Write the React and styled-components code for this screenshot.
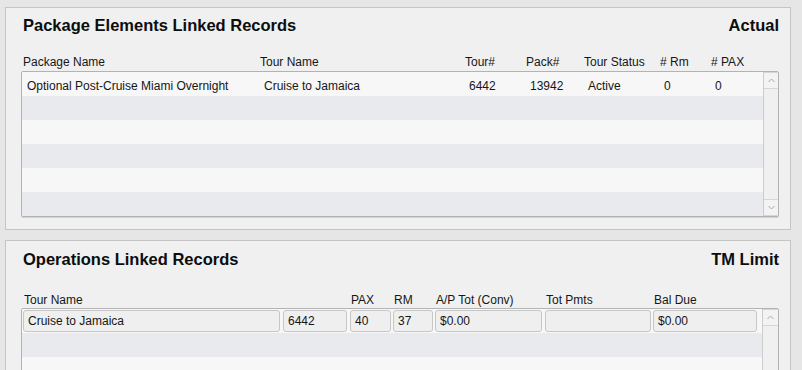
import React from "react";
import styled, { createGlobalStyle } from "styled-components";

const Global = createGlobalStyle`
  html, body { margin: 0; padding: 0; background: #e6e6e6; overflow: hidden; }
  body { font-family: "Liberation Sans", Arial, sans-serif; color: #161616; }
`;

const Page = styled.div`
  display: flex;
  flex-direction: column;
  gap: 10px;
  padding: 7px 0 0 5px;
  width: 786px;
`;

const Panel = styled.section`
  background: #f0f0f0;
  border: 1px solid #c4c4c4;
  padding: ${(p) => p.$pad};
  display: flex;
  flex-direction: column;
`;

const TitleRow = styled.div`
  display: flex;
  justify-content: space-between;
  padding: 0 0 0 2px;
  font-size: 16.5px;
  line-height: 20px;
  font-weight: bold;
  color: #0d0d0d;
`;

const Labels = styled.div`
  display: grid;
  grid-template-columns: ${(p) => p.$cols};
  margin: ${(p) => p.$margin};
  padding-left: ${(p) => p.$indent};
  font-size: 12px;
  line-height: 16px;
  color: #161616;
  white-space: nowrap;
`;

const Grid = styled.div`
  display: flex;
  border: 1px solid #b3b3b3;
  border-radius: 2px;
  box-shadow: 0 1px 0 #d4d4d4;
  background: #f7f7f7;
  overflow: hidden;
`;

const Rows = styled.div`
  flex: 1;
  display: flex;
  flex-direction: column;
`;

const Row = styled.div`
  display: grid;
  grid-template-columns: ${(p) => p.$cols};
  align-items: center;
  height: 24px;
  flex: none;
  box-sizing: border-box;
  padding-left: ${(p) => p.$indent || 0}px;
  background: ${(p) => (p.$alt ? "#e8eaed" : "#f7f7f7")};
  font-size: 12px;
  color: #161616;
  white-space: nowrap;
`;

const Cell = styled.span`
  padding: 3px 0 0 5px;
  overflow: hidden;
`;

const BoxCell = styled.span`
  height: 22px;
  margin-right: ${(p) => p.$gap}px;
  box-sizing: border-box;
  border: 1px solid #c6c6c6;
  border-radius: 3px;
  background: #efefef;
  padding: 1px 0 0 4px;
  line-height: 19px;
  overflow: hidden;
`;

const Scroll = styled.div`
  width: 15px;
  flex: none;
  display: flex;
  flex-direction: column;
  justify-content: space-between;
  border-left: 1px solid #cdcdcd;
  background: #f0f0f0;
`;

const ScrollBtn = styled.div`
  height: 15px;
  display: flex;
  align-items: center;
  justify-content: center;
  border: 1px solid #d6d6d6;
  border-left: none;
  border-right: none;
  background: #f3f3f3;
`;

const Chevron = ({ up }) => (
  <svg width="7" height="5" viewBox="0 0 7 5">
    <path
      d={up ? "M0.5 4 L3.5 1 L6.5 4" : "M0.5 1 L3.5 4 L6.5 1"}
      fill="none"
      stroke="#a8a8a8"
      strokeWidth="1"
    />
  </svg>
);

const cols1 = "237px 205px 61px 58px 76px 51px 53px";
const cols2 = "260px 67px 43px 42px 110px 108px 108px";

const pkgRows = [
  ["Optional Post-Cruise Miami Overnight", "Cruise to Jamaica", "6442", "13942", "Active", "0", "0"],
];

export default function App() {
  return (
    <>
      <Global />
      <Page>
        <Panel $pad="7px 11px 12px 15px">
          <TitleRow>
            <span>Package Elements Linked Records</span>
            <span>Actual</span>
          </TitleRow>
          <Labels $cols={cols1} $margin="19px 0 1px 0" $indent="2px">
            <span>Package Name</span>
            <span>Tour Name</span>
            <span>Tour#</span>
            <span>Pack#</span>
            <span>Tour Status</span>
            <span># Rm</span>
            <span># PAX</span>
          </Labels>
          <Grid>
            <Rows>
              {[0, 1, 2, 3, 4, 5].map((i) => (
                <Row key={i} $cols={cols1} $alt={i % 2 === 1}>
                  {(pkgRows[i] || ["", "", "", "", "", "", ""]).map((v, j) => (
                    <Cell key={j}>{v}</Cell>
                  ))}
                </Row>
              ))}
            </Rows>
            <Scroll>
              <ScrollBtn><Chevron up /></ScrollBtn>
              <ScrollBtn><Chevron /></ScrollBtn>
            </Scroll>
          </Grid>
        </Panel>
        <Panel $pad="8px 11px 12px 15px">
          <TitleRow>
            <span>Operations Linked Records</span>
            <span>TM Limit</span>
          </TitleRow>
          <Labels $cols={cols2} $margin="23px 0 0 0" $indent="3px">
            <span>Tour Name</span>
            <span></span>
            <span>PAX</span>
            <span>RM</span>
            <span>A/P Tot (Conv)</span>
            <span>Tot Pmts</span>
            <span>Bal Due</span>
          </Labels>
          <Grid>
            <Rows>
              <Row $cols={cols2} $indent={1}>
                <BoxCell $gap={3}>Cruise to Jamaica</BoxCell>
                <BoxCell $gap={3}>6442</BoxCell>
                <BoxCell $gap={2}>40</BoxCell>
                <BoxCell $gap={2}>37</BoxCell>
                <BoxCell $gap={3}>$0.00</BoxCell>
                <BoxCell $gap={2}></BoxCell>
                <BoxCell $gap={4}>$0.00</BoxCell>
              </Row>
              <Row $cols={cols2} $alt />
              <Row $cols={cols2} />
              <Row $cols={cols2} $alt />
            </Rows>
            <Scroll>
              <ScrollBtn><Chevron up /></ScrollBtn>
              <ScrollBtn><Chevron /></ScrollBtn>
            </Scroll>
          </Grid>
        </Panel>
      </Page>
    </>
  );
}
